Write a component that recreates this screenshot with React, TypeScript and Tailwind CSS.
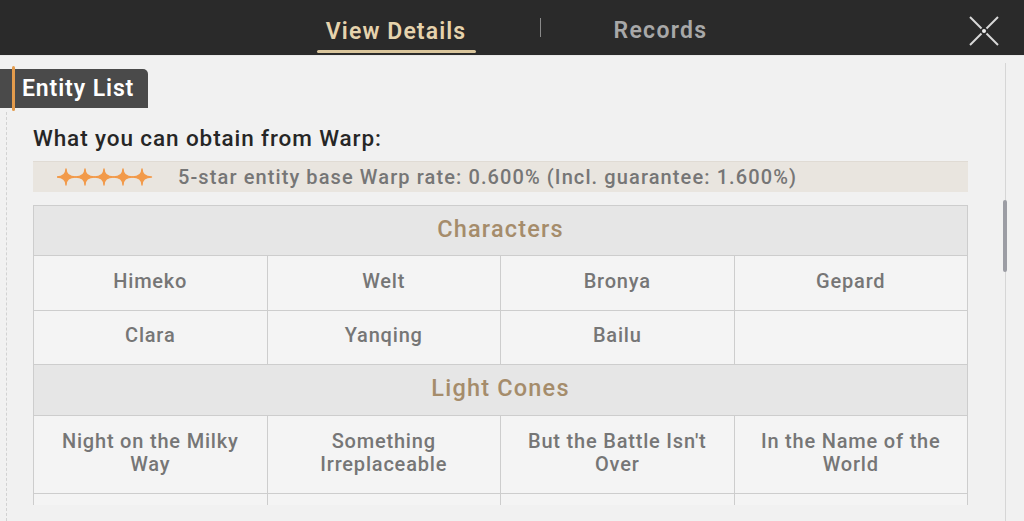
import React from "react";

const F = "font-['Roboto','Liberation_Sans',sans-serif]";

function Stars() {
  const cs = [9, 28, 47, 66, 85];
  return (
    <svg width="96" height="20" viewBox="0 0 96 20" className="block">
      {cs.map((c) => (
        <path
          key={c}
          d={`M ${c - 9.5} 10 Q ${c} 10 ${c} 2 Q ${c} 10 ${c + 9.5} 10 Q ${c} 10 ${c} 18 Q ${c} 10 ${c - 9.5} 10 Z`}
          fill="#f29a4a"
          stroke="#f29a4a"
          strokeWidth="1.4"
          strokeLinejoin="round"
        />
      ))}
    </svg>
  );
}

function CloseIcon() {
  return (
    <svg width="32" height="32" viewBox="0 0 32 32" className="block">
      <line x1="2" y1="2" x2="13.5" y2="13.5" stroke="#d9d9d9" strokeWidth="2" />
      <line x1="30" y1="2" x2="18.5" y2="13.5" stroke="#d9d9d9" strokeWidth="2" />
      <line x1="2" y1="30" x2="13.5" y2="18.5" stroke="#d9d9d9" strokeWidth="2" />
      <line x1="30" y1="30" x2="18.5" y2="18.5" stroke="#d9d9d9" strokeWidth="2" />
      <circle cx="16" cy="16" r="2" fill="#f0f0f0" />
    </svg>
  );
}

function Cell({ children }: { children?: React.ReactNode }) {
  return (
    <div className="border-r border-b border-[#cdcdcd] bg-[#f4f4f4] flex items-center justify-center text-center px-3 pb-[4px] text-[20px] leading-[23px] tracking-[0.8px] font-medium text-[#767676]">
      {children}
    </div>
  );
}

function HeaderRow({ title }: { title: string }) {
  return (
    <div className="col-span-4 border-r border-b border-[#cdcdcd] bg-[#e6e6e6] flex items-center justify-center pb-[2px] text-[23.5px] tracking-[1.2px] font-medium text-[#a58c6b]">
      {title}
    </div>
  );
}

export default function App() {
  return (
    <div className={`${F} relative w-[1024px] h-[521px] overflow-hidden bg-[#f1f1f1]`}>
      {/* Top bar */}
      <div className="relative h-[56px] bg-[#2a2a2a] border-b border-[#e9e9e9] flex items-stretch justify-center">
        <div className="w-[159px] flex flex-col items-center justify-end">
          <div className="text-[23px] tracking-[1.1px] font-semibold text-[#e6d3ad] leading-none pb-[7px]">View Details</div>
          <div className="w-full h-[3px] bg-[#d9c59c] rounded-full mb-[2px]" />
        </div>
        <div className="w-[64px]" />
        <div className="self-center w-px h-[19px] bg-[#8a8a8a]" />
        <div className="w-[73px]" />
        <div className="flex items-center text-[23px] tracking-[1.3px] font-semibold text-[#a8a8a8] leading-none pt-[5px]">Records</div>
        <div className="absolute right-[24px] top-[15px]">
          <CloseIcon />
        </div>
      </div>

      {/* Left dashed rule */}
      <div className="absolute left-[6px] top-[112px] bottom-0 border-l border-dashed border-[#d2d2d2]" />

      {/* Scrollbar */}
      <div className="absolute left-[1005px] top-[63px] bottom-0 w-px bg-[#d6d6d6]" />
      <div className="absolute left-[1003px] top-[200px] w-[4px] h-[72px] bg-[#9c9da4] rounded-sm" />

      {/* Body */}
      <div className="h-[449px] overflow-hidden">
        <div className="pt-[13px]">
          <div className="relative w-[148px] h-[39px] bg-[#4a4a4a] rounded-tr-[5px] flex items-center">
            <div className="absolute left-[12px] top-[-3px] bottom-[-3px] w-[3px] bg-[#e39b4c] rounded-full" />
            <span className="pl-[22px] text-[23px] tracking-[0.9px] font-semibold text-white leading-none">Entity List</span>
          </div>
        </div>

        <div className="pl-[33px] w-[968px]">
          <div className="mt-[15px] h-[32px] flex items-center text-[22.5px] tracking-[0.9px] font-medium text-[#262626]">
            What you can obtain from Warp:
          </div>

          <div className="mt-[6px] h-[31px] bg-[#e9e5df] border-t border-[#e0dbd4] flex items-center pl-[24px]">
            <Stars />
            <span className="ml-[25px] text-[20px] tracking-[1.1px] font-medium text-[#767676]">
              5-star entity base Warp rate: 0.600% (Incl. guarantee: 1.600%)
            </span>
          </div>

          <div className="mt-[13px] grid grid-cols-4 border-l border-t border-[#cdcdcd] [grid-template-rows:50px_55px_54px_51px_78px_40px]">
            <HeaderRow title="Characters" />
            <Cell>Himeko</Cell>
            <Cell>Welt</Cell>
            <Cell>Bronya</Cell>
            <Cell>Gepard</Cell>
            <Cell>Clara</Cell>
            <Cell>Yanqing</Cell>
            <Cell>Bailu</Cell>
            <Cell />
            <HeaderRow title="Light Cones" />
            <Cell>Night on the Milky Way</Cell>
            <Cell>Something Irreplaceable</Cell>
            <Cell>But the Battle Isn't Over</Cell>
            <Cell>In the Name of the World</Cell>
            <Cell />
            <Cell />
            <Cell />
            <Cell />
          </div>
        </div>
      </div>
    </div>
  );
}
